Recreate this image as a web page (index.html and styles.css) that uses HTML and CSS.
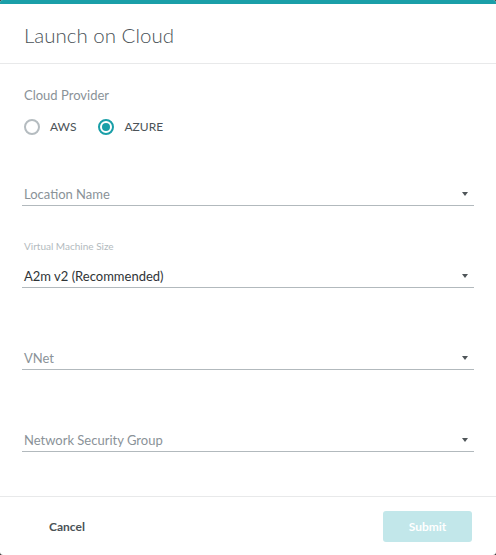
FILE: index.html
```html
<!DOCTYPE html>
<html>
<head>
<meta charset="utf-8">
<link rel="stylesheet" href="styles.css">
</head>
<body>
<div class="dialog">
  <div class="header"><h1 class="title">Launch on Cloud</h1></div>
  <div class="content">
    <div class="group-label">Cloud Provider</div>
    <div class="radios">
      <label class="radio"><span class="circle"></span><span class="radio-text">AWS</span></label>
      <label class="radio checked"><span class="circle"></span><span class="radio-text">AZURE</span></label>
    </div>
    <div class="fields">
      <div class="field">
        <div class="field-label"></div>
        <div class="select"><span class="placeholder">Location Name</span><span class="arrow"></span></div>
      </div>
      <div class="field">
        <div class="field-label">Virtual Machine Size</div>
        <div class="select"><span class="value">A2m v2 (Recommended)</span><span class="arrow"></span></div>
      </div>
      <div class="field">
        <div class="field-label"></div>
        <div class="select"><span class="placeholder">VNet</span><span class="arrow"></span></div>
      </div>
      <div class="field">
        <div class="field-label"></div>
        <div class="select"><span class="placeholder">Network Security Group</span><span class="arrow"></span></div>
      </div>
    </div>
  </div>
  <div class="footer">
    <button class="btn-cancel">Cancel</button>
    <button class="btn-submit">Submit</button>
  </div>
</div>
</body>
</html>
```
FILE: styles.css
```css
* { box-sizing: border-box; }
html, body { margin: 0; padding: 0; }
body {
  background: #333;
  font-family: Lato, "Open Sans", sans-serif;
  width: 496px;
  height: 555px;
}
.dialog {
  width: 496px;
  height: 555px;
  background: #fff;
  border-radius: 3px;
  overflow: hidden;
  display: flex;
  flex-direction: column;
}
.header {
  height: 64px;
  border-top: 4px solid #1a9fa8;
  border-bottom: 1px solid #e8e9ea;
  padding: 0 24px;
  display: flex;
  align-items: center;
  flex-shrink: 0;
}
.title {
  margin: 0;
  font-size: 20.5px;
  font-weight: 300;
  color: #4a5257;
  line-height: 24px;
  padding-top: 2px;
}
.content {
  flex: 1;
  padding: 23px 22px 0 22px;
}
.group-label {
  font-size: 13px;
  line-height: 16px;
  color: #8a9298;
  padding-left: 2px;
}
.radios {
  display: flex;
  gap: 22px;
  margin-top: 16px;
  padding-left: 2px;
  height: 16px;
}
.radio {
  display: flex;
  align-items: center;
  gap: 10px;
  font-size: 12px;
  color: #4b5257;
}
.circle {
  width: 16px;
  height: 16px;
  border: 2px solid #b5bcc0;
  border-radius: 50%;
  display: flex;
  align-items: center;
  justify-content: center;
}
.radio.checked .circle { border-color: #1a9fa8; }
.radio.checked .circle::after {
  content: "";
  width: 8px;
  height: 8px;
  border-radius: 50%;
  background: #1a9fa8;
}
.radio-text { line-height: 16px; }
.fields {
  margin-top: 23px;
  display: flex;
  flex-direction: column;
  gap: 34px;
}
.field {
  height: 48px;
  display: flex;
  flex-direction: column;
}
.field-label {
  height: 16px;
  font-size: 10px;
  line-height: 13px;
  color: #b3babe;
  padding-left: 2px;
}
.select {
  height: 32px;
  border-bottom: 1px solid #b2b9bd;
  display: flex;
  align-items: flex-end;
  justify-content: space-between;
  padding: 0 6px 3px 2px;
  font-size: 13px;
  line-height: 16px;
}
.placeholder { color: #8a9298; }
.value { color: #2f3437; }
.arrow {
  width: 0;
  height: 0;
  border-left: 3.5px solid transparent;
  border-right: 3.5px solid transparent;
  border-top: 4px solid #4f5559;
  margin-bottom: 6px;
}
.footer {
  height: 59px;
  border-top: 1px solid #e8e9ea;
  padding: 0 24px 0 25px;
  display: flex;
  align-items: center;
  justify-content: space-between;
  flex-shrink: 0;
}
.btn-cancel {
  background: none;
  border: none;
  padding: 0 24px;
  font-family: Lato, "Open Sans", sans-serif;
  font-size: 12px;
  font-weight: 700;
  color: #4a5256;
  height: 31px;
}
.btn-submit {
  width: 89px;
  height: 31px;
  background: #c2e7ea;
  border: none;
  border-radius: 3px;
  color: #fff;
  font-family: Lato, "Open Sans", sans-serif;
  font-size: 12px;
  font-weight: 700;
}
```
